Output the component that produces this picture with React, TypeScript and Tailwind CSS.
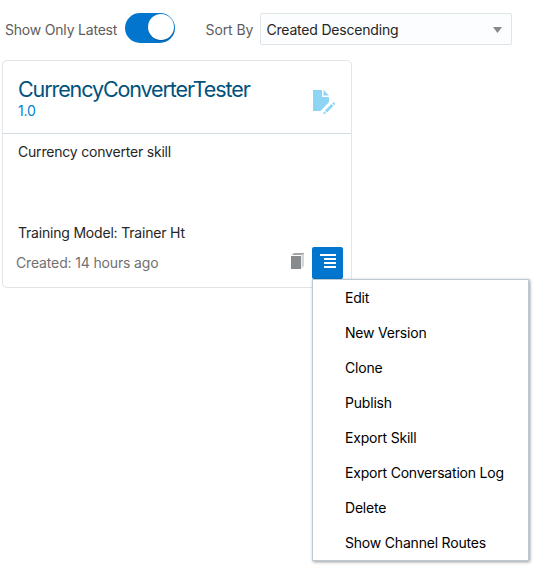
const actions = [
  "Edit",
  "New Version",
  "Clone",
  "Publish",
  "Export Skill",
  "Export Conversation Log",
  "Delete",
  "Show Channel Routes",
];

function DraftIcon() {
  return (
    <svg width="23" height="26" viewBox="0 0 23 26" className="block" fill="#8dd5f3">
      <path d="M0 0h9v7h7v5L7.500 21H0z" />
      <path d="M10.500 0L16 5.500h-5.500z" />
      <path d="M12 20.500L18.400 14.100l2 2L14 22.500z M19.200 13.300l1.200-1.200 2 2-1.200 1.200z M11.100 21.200l2.100 2.100-3.200 1z" />
    </svg>
  );
}

function VersionsIcon() {
  return (
    <svg width="14" height="17" viewBox="0 0 14 17" className="block">
      <path d="M0 3h10v13H0z" fill="#878b8e" />
      <path d="M0.500 2L3 0h10v1l-2 1z" fill="#a4a7a9" />
      <path d="M10.500 2.500L13 1v12l-2.500 2.500z" fill="#d3d6d8" />
    </svg>
  );
}

function MenuIcon() {
  return (
    <svg width="16" height="14" viewBox="0 0 16 14" className="block" fill="#fff">
      <path d="M0 0h16v2H0zM4 4h12v2H4zM4 8h12v2H4zM4 12h12v2H4z" />
    </svg>
  );
}

function ActionMenu() {
  return (
    <ul className="absolute left-0 top-8 z-10 w-[217px] border border-[#bccbd3] bg-white text-black shadow-[1px_1px_3px_rgba(0,0,0,0.4)]">
      {actions.map((label) => (
        <li key={label} className="flex h-[35px] items-center whitespace-nowrap pl-8 pt-px">
          {label}
        </li>
      ))}
    </ul>
  );
}

export default function App() {
  return (
    <main className="h-[574px] w-[542px] overflow-hidden bg-white pl-0.5 pt-[13px] font-['Inter',sans-serif] text-[14px] leading-5 tracking-[-0.2px] text-[#252525]">
      <div className="flex h-8 items-start pl-[3px] text-[#5d5d5d]">
        <span className="w-[120px] whitespace-nowrap pt-[7px]">Show Only Latest</span>
        <button className="flex h-[30px] w-[50px] justify-end rounded-full bg-[#0276ce] pr-px pt-px" aria-label="Show Only Latest">
          <span className="h-[26px] w-[26px] rounded-full bg-white shadow-[0_1px_1px_rgba(0,0,0,0.25)]" />
        </button>
        <span className="ml-[30.5px] w-[54.5px] whitespace-nowrap pt-[7px] tracking-[-0.1px]">Sort By</span>
        <div className="flex h-8 w-[252px] items-center justify-between rounded-[2px] border border-[#dfe4e7] bg-[#fcfdfe] pl-[5.5px] pr-[9px] text-[#252525]">
          <span className="pt-0.5">Created Descending</span>
          <svg width="9" height="6" viewBox="0 0 9 6" className="mt-0.5">
            <path d="M0 0h9L4.500 6z" fill="#85898c" />
          </svg>
        </div>
      </div>
      <section className="mt-[15px] flex h-[228px] w-[350px] flex-col rounded-[5px] border border-[#dfe5e8]">
        <header className="flex h-[73px] justify-between border-b border-[#d2dde3] pl-[15px] pr-[15px]">
          <div className="pt-[14px]">
            <h1 className="text-[21.5px] leading-7 tracking-[-1.11px] text-[#00527d]">CurrencyConverterTester</h1>
            <p className="-mt-0.5 text-[#0085cf]">1.0</p>
          </div>
          <div className="pt-[29px]">
            <DraftIcon />
          </div>
        </header>
        <div className="flex h-[113px] flex-col justify-between pb-1 pl-[15px] pt-2">
          <p>Currency converter skill</p>
          <p>Training Model: Trainer Ht</p>
        </div>
        <footer className="flex pl-[13px] text-[#717171]">
          <span className="w-[275px] pt-1.5 tracking-[-0.15px]">Created: 14 hours ago</span>
          <span className="w-[21px] pt-1.5">
            <VersionsIcon />
          </span>
          <div className="relative text-black">
            <button className="flex h-8 w-[31px] justify-end rounded-[2px] bg-[#0276ce] pr-[7px] pt-[7px]" aria-label="Actions">
              <MenuIcon />
            </button>
            <ActionMenu />
          </div>
        </footer>
      </section>
    </main>
  );
}
